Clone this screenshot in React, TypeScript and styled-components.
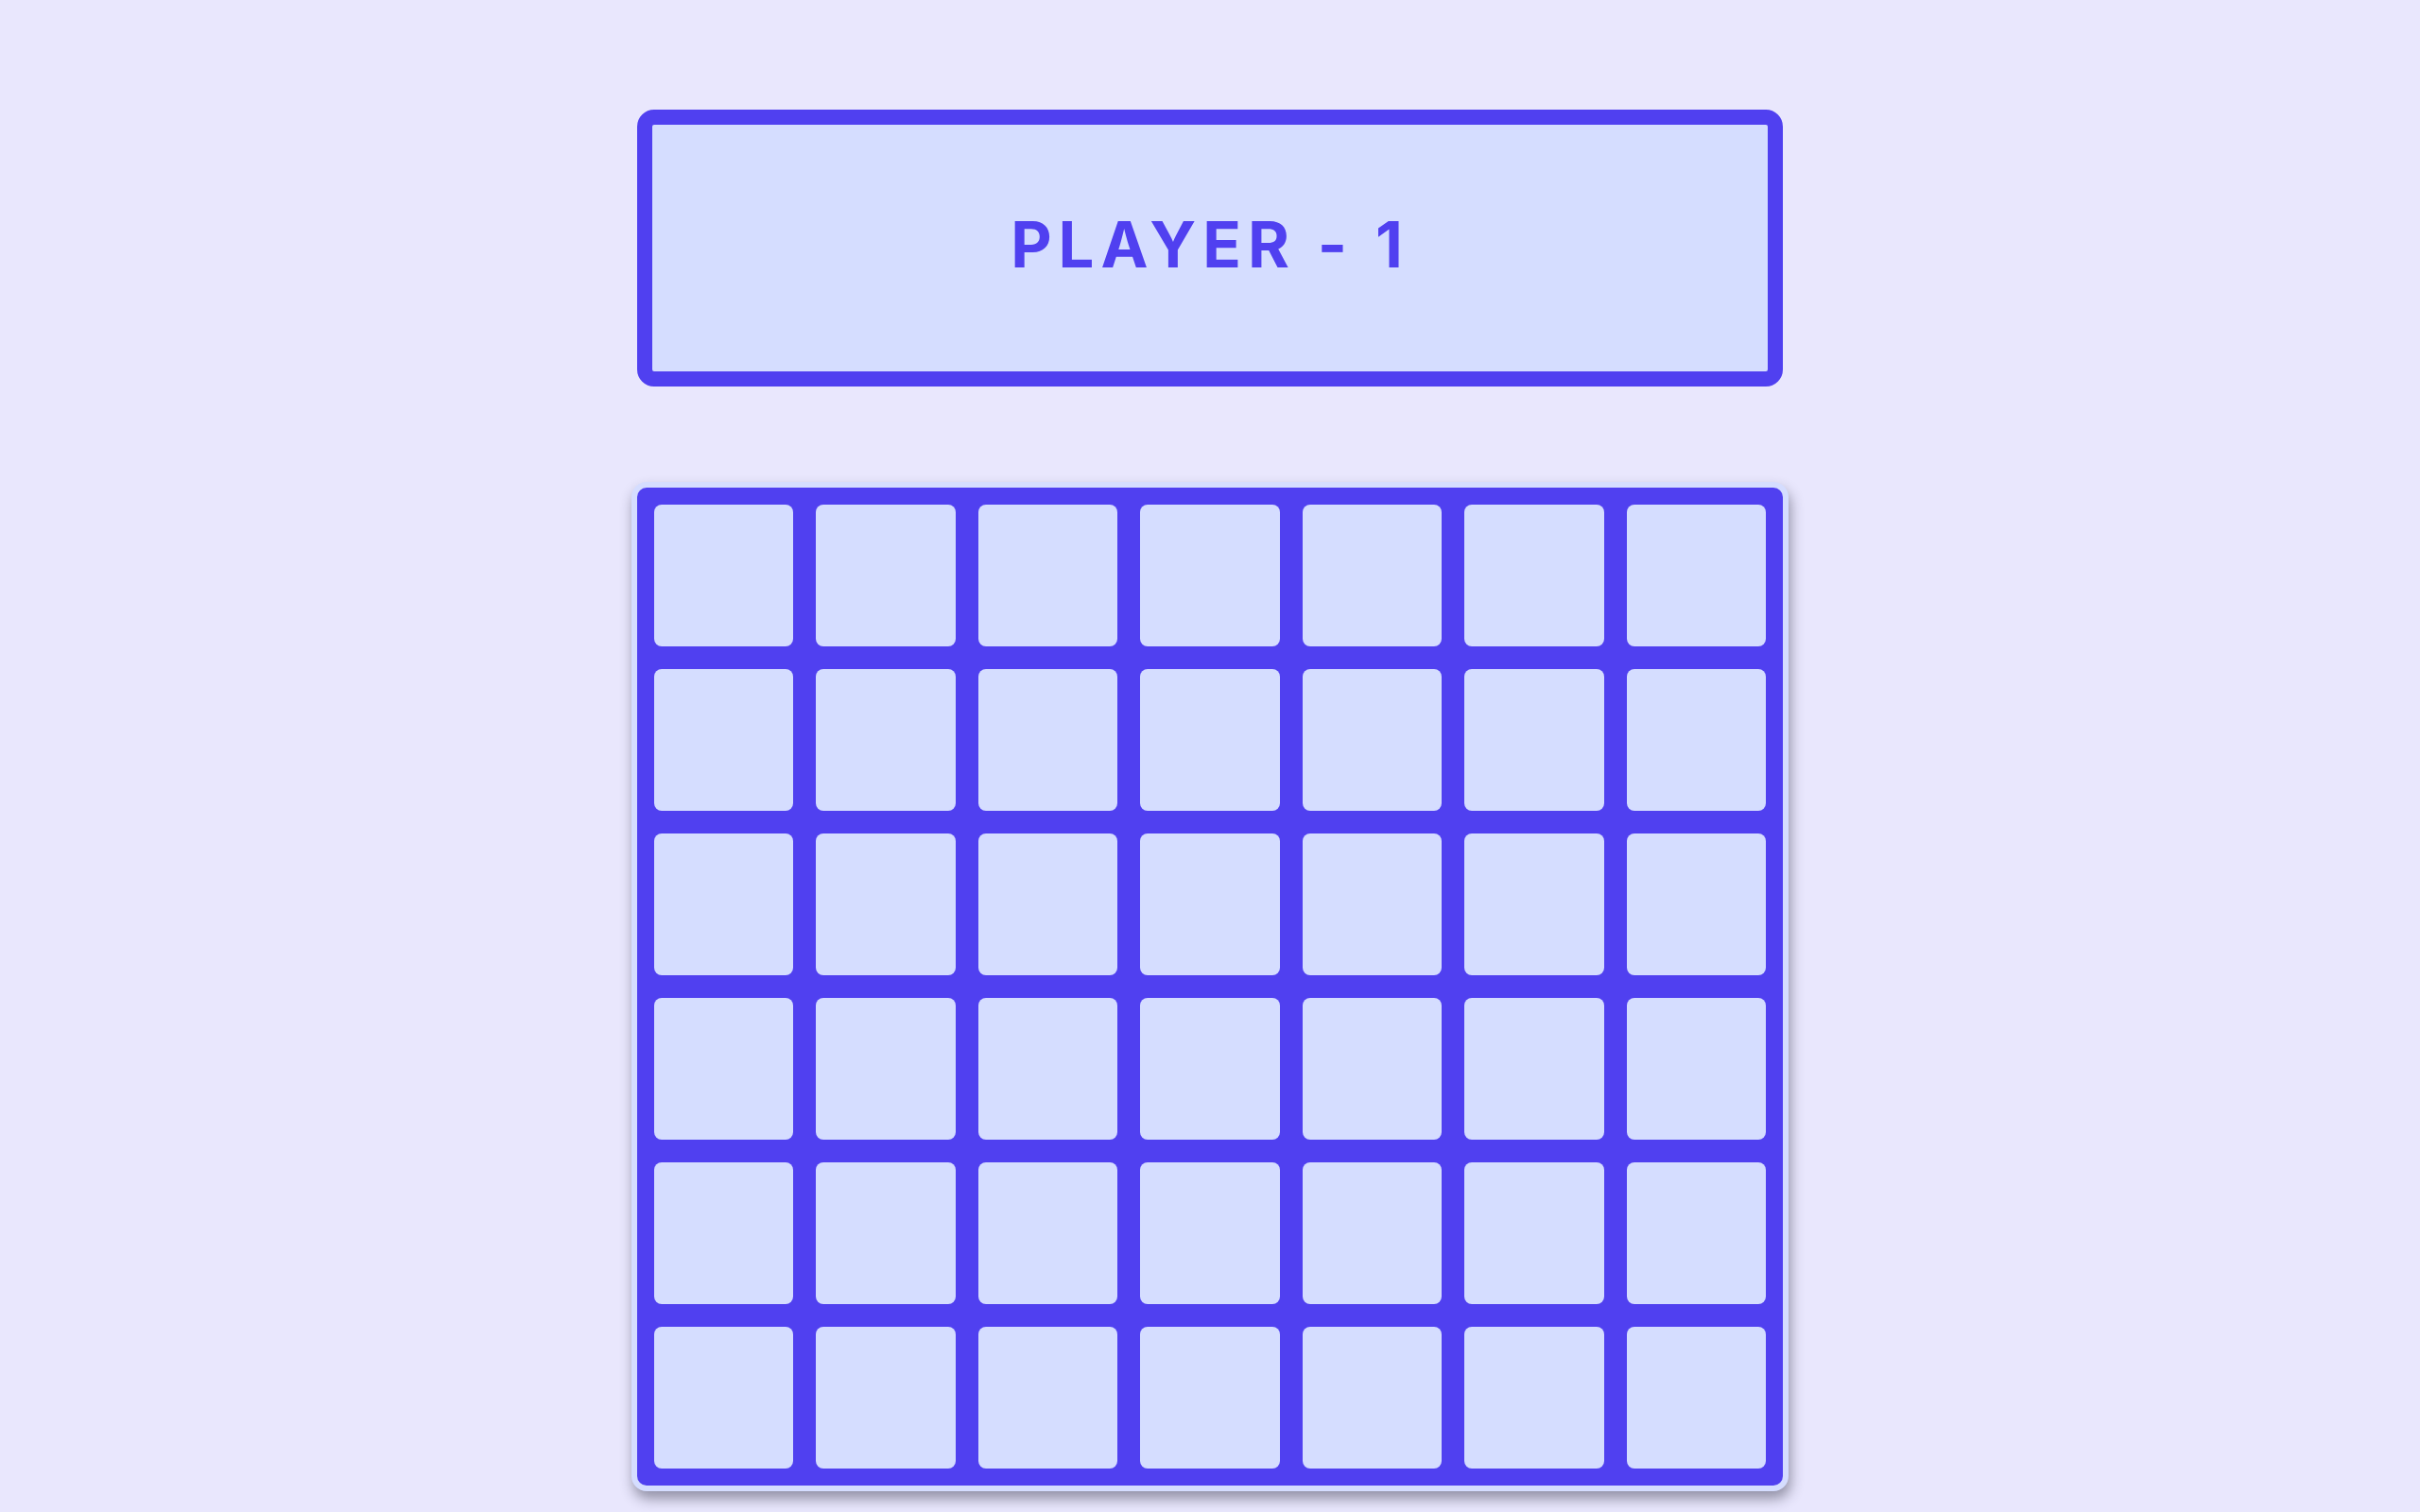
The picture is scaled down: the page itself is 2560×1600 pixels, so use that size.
import React from "react";
import styled, { createGlobalStyle } from "styled-components";

const Global = createGlobalStyle`
  html, body { margin: 0; padding: 0; }
  body {
    background: #e9e7fd;
    font-family: Inter, "Noto Sans", sans-serif;
  }
`;

const Page = styled.main`
  min-height: 1600px;
  display: flex;
  flex-direction: column;
  align-items: center;
  padding-top: 116px;
  box-sizing: border-box;
`;

const Banner = styled.div`
  width: 1212px;
  height: 293px;
  box-sizing: border-box;
  border: 16px solid #5040f0;
  border-radius: 18px;
  background: #d5ddff;
  display: flex;
  align-items: center;
  justify-content: center;
`;

const Title = styled.h1`
  margin: 0 0 8px;
  color: #5040f0;
  font-size: 67px;
  font-weight: 700;
  letter-spacing: 7px;
  line-height: 1;
  white-space: pre;
`;

const Board = styled.div`
  margin-top: 101px;
  width: 1224px;
  box-sizing: border-box;
  border: 6px solid #d5ddff;
  border-radius: 16px;
  background: #5040f0;
  padding: 18px;
  display: grid;
  grid-template-columns: repeat(7, 1fr);
  grid-auto-rows: 150px;
  gap: 24px;
  box-shadow: 2px 8px 14px rgba(40, 40, 60, 0.45);
`;

const Cell = styled.div`
  background: #d5ddff;
  border-radius: 8px;
`;

export default function App() {
  const cells = Array.from({ length: 42 }, (_, i) => i);
  return (
    <>
      <Global />
      <Page>
        <Banner>
          <Title>PLAYER - 1</Title>
        </Banner>
        <Board>
          {cells.map((i) => (
            <Cell key={i} />
          ))}
        </Board>
      </Page>
    </>
  );
}
